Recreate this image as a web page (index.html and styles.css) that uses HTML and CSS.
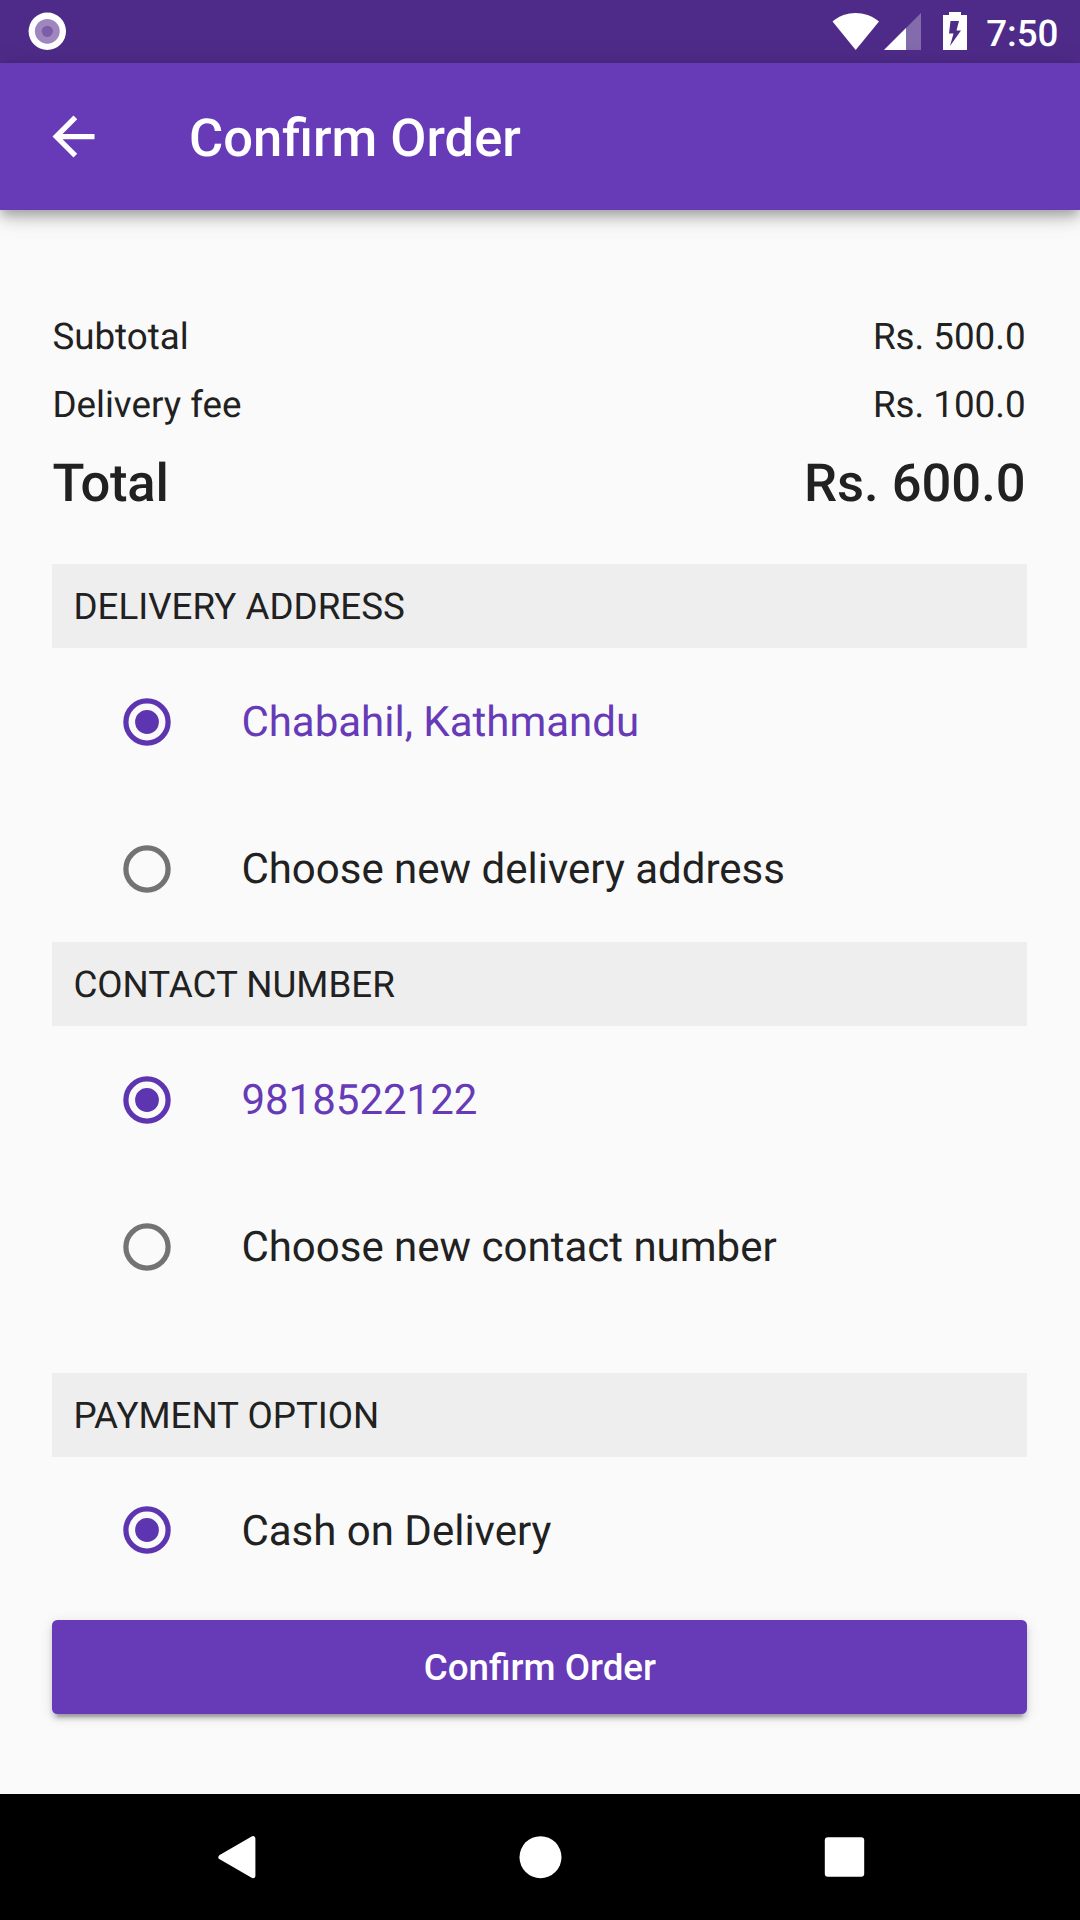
FILE: index.html
```html
<!DOCTYPE html>
<html lang="en">
<head>
<meta charset="utf-8">
<title>Confirm Order</title>
<link rel="stylesheet" href="styles.css">
</head>
<body>
<svg width="0" height="0" class="symbols">
  <symbol id="radio-off" viewBox="0 0 48 48"><circle cx="24" cy="24" r="21.100" fill="none" stroke="#737373" stroke-width="5.250"/></symbol>
  <symbol id="radio-on" viewBox="0 0 48 48"><circle cx="24" cy="24" r="21.100" fill="none" stroke="#5e35b1" stroke-width="5.250"/><circle cx="24" cy="24" r="11.900" fill="#5e35b1"/></symbol>
</svg>
<div class="screen">
  <div class="status-bar">
    <svg class="status-notification" width="38" height="38" viewBox="0 0 38 38">
      <circle cx="19.300" cy="19.300" r="18.700" fill="#fff"/>
      <circle cx="19.300" cy="19.300" r="12.400" fill="#9f86bf"/>
      <circle cx="19.300" cy="19.300" r="5.600" fill="#7b5ea7"/>
    </svg>
    <svg class="status-icons" width="135" height="38" viewBox="0 0 135 38">
      <path d="M.5 9.500C14-1.800 33-1.800 47 9.500L23.700 38Z" fill="#fff"/>
      <path d="M89 1V38H52Z" fill="#fff" fill-opacity=".3"/>
      <path d="M74 16V38H52Z" fill="#fff"/>
      <path fill-rule="evenodd" d="M117 0H129V3H135V38H111V3H117ZM118.500 9L117 21.500H121.500L118 34L129 18.500H124.500L127 9Z" fill="#fff"/>
    </svg>
    <span class="status-time">7:50</span>
  </div>
  <header class="app-bar">
    <svg class="back" width="63" height="63" viewBox="0 0 24 24"><path d="M20 11H7.830l5.590-5.590L12 4l-8 8 8 8 1.410-1.410L7.830 13H20v-2z" fill="#fff"/></svg>
    <h1 class="title">Confirm Order</h1>
  </header>
  <main class="content">
    <div class="summary">
      <div class="line"><span>Subtotal</span><span>Rs. 500.0</span></div>
      <div class="line"><span>Delivery fee</span><span>Rs. 100.0</span></div>
      <div class="line total"><span class="total-label">Total</span><span>Rs. 600.0</span></div>
    </div>
    <section class="group">
      <h2 class="group-title">DELIVERY ADDRESS</h2>
      <div class="option selected"><svg class="radio"><use href="#radio-on"/></svg><span class="label">Chabahil, Kathmandu</span></div>
      <div class="option"><svg class="radio"><use href="#radio-off"/></svg><span class="label">Choose new delivery address</span></div>
    </section>
    <section class="group contact">
      <h2 class="group-title">CONTACT NUMBER</h2>
      <div class="option selected"><svg class="radio"><use href="#radio-on"/></svg><span class="label">9818522122</span></div>
      <div class="option"><svg class="radio"><use href="#radio-off"/></svg><span class="label">Choose new contact number</span></div>
    </section>
    <section class="group">
      <h2 class="group-title">PAYMENT OPTION</h2>
      <div class="option"><svg class="radio"><use href="#radio-on"/></svg><span class="label">Cash on Delivery</span></div>
    </section>
    <button class="confirm">Confirm Order</button>
  </main>
  <nav class="nav-bar">
    <svg width="63" height="63" viewBox="0 0 63 63"><path d="M47.500 13V50L15.500 31.500Z" transform="translate(.4 -.3)" fill="#fff" stroke="#fff" stroke-width="5" stroke-linejoin="round"/></svg>
    <svg width="63" height="63" viewBox="0 0 63 63"><circle cx="31.500" cy="31.200" r="21" fill="#fff"/></svg>
    <svg width="63" height="63" viewBox="0 0 63 63"><rect x="11.800" y="11.300" width="39.400" height="39.400" rx="3" fill="#fff"/></svg>
  </nav>
</div>
</body>
</html>
```
FILE: styles.css
```css
* {
  box-sizing: border-box;
}

body {
  margin: 0;
  background: #fafafa;
  color: #212121;
  font-family: Roboto, sans-serif;
  font-size: 36.75px;
  text-rendering: geometricPrecision;
}

.symbols {
  display: none;
}

.screen {
  display: flex;
  flex-direction: column;
  width: 1080px;
  height: 1920px;
}

.status-bar {
  display: flex;
  align-items: flex-start;
  height: 63px;
  padding: 12px 21.5px 0 28px;
  background: #4e2b88;
  color: #fff;
}

.status-icons {
  margin-left: auto;
}

.status-time {
  margin-left: 19.5px;
  font-weight: 500;
  line-height: 43px;
}

.app-bar {
  display: flex;
  align-items: center;
  height: 147px;
  padding-left: 42px;
  background: #673ab7;
  color: #fff;
  box-shadow: 0 5px 10px -2px rgba(0, 0, 0, .2), 0 10px 13px rgba(0, 0, 0, .14), 0 3px 26px rgba(0, 0, 0, .12);
}

.title {
  margin: 0 0 0 84px;
  padding-top: 4px;
  font-size: 52.5px;
  font-weight: 500;
  line-height: 61px;
}

.content {
  display: flex;
  flex: 1;
  flex-direction: column;
  padding: 106px 52.6px 0 52.4px;
}

.summary {
  display: flex;
  flex-direction: column;
  gap: 26.25px;
  margin-bottom: 51.5px;
}

.line {
  display: flex;
  justify-content: space-between;
  padding-right: 1.8px;
  line-height: 42px;
}

.total {
  font-size: 52.5px;
  font-weight: 500;
  line-height: 60.4px;
}

.total-label {
  letter-spacing: -.25px;
}

.contact {
  margin-bottom: 52.5px;
}

.group-title {
  height: 84px;
  margin: 0;
  padding-left: 21px;
  background: #eee;
  font-size: 36.75px;
  font-weight: 400;
  line-height: 86.6px;
}

.option {
  display: flex;
  align-items: center;
  height: 147px;
  padding-left: 70.6px;
  gap: 70.4px;
  font-size: 42px;
}

.label {
  padding-top: 2px;
}

.selected {
  color: #673ab7;
}

.radio {
  width: 48px;
  height: 48px;
}

.confirm {
  height: 94.5px;
  margin-top: 15.75px;
  padding: 2px 0 0;
  border: 0;
  border-radius: 5.25px;
  background: #673ab7;
  color: #fff;
  font: 500 36.75px/92.5px Roboto, sans-serif;
  box-shadow: 0 8px 3px -5px rgba(0, 0, 0, .2), 0 5px 5px rgba(0, 0, 0, .14), 0 3px 13px rgba(0, 0, 0, .12);
}

.nav-bar {
  display: flex;
  align-items: center;
  justify-content: center;
  gap: 241px;
  height: 126px;
  background: #000;
}
```
